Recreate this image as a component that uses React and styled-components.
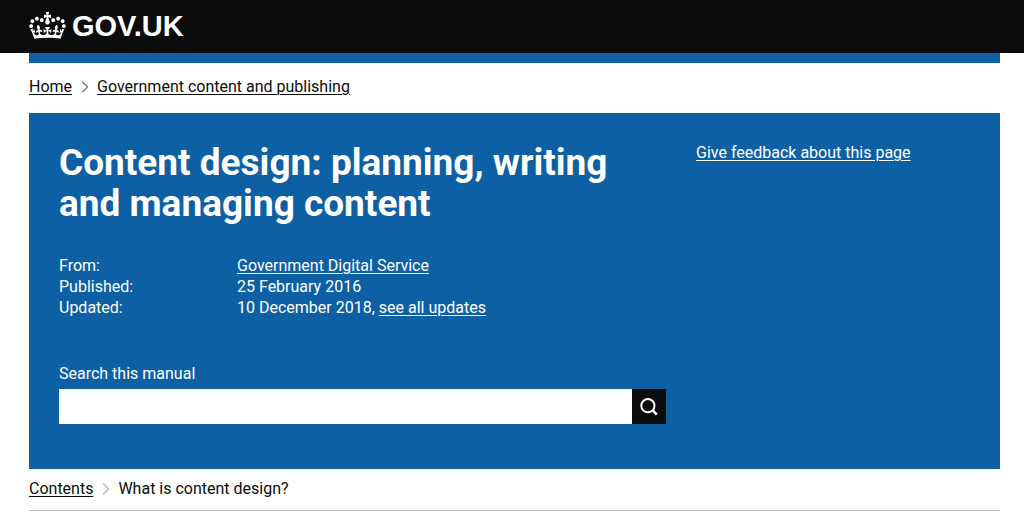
import React from "react";
import styled, { createGlobalStyle, css } from "styled-components";

const GlobalStyle = createGlobalStyle`
  * {
    box-sizing: border-box;
  }
  body {
    margin: 0;
    background: #ffffff;
    color: #0b0c0c;
    font-family: Roboto, "Noto Sans", sans-serif;
    font-size: 16px;
    line-height: 21px;
  }
`;

const Container = styled.div`
  padding: 0 24px 0 29px;
`;

const Header = styled.header`
  background: #0b0c0c;
`;

const HeaderInner = styled(Container)`
  display: flex;
  align-items: center;
  height: 53px;
  padding-bottom: 2px;
`;

const HomeLink = styled.a`
  display: flex;
  align-items: center;
  gap: 6px;
  color: #ffffff;
  font-family: "Liberation Sans", Arial, sans-serif;
  font-size: 29px;
  font-weight: 700;
  line-height: 30px;
  text-decoration: none;
`;

const PhaseBar = styled.div`
  height: 10px;
  background: #0e60a5;
`;

const Crumbs = styled.nav`
  ol {
    display: flex;
    align-items: center;
    gap: 9px;
    margin: 0;
    padding: 0;
    list-style: none;
  }
  li {
    display: flex;
    align-items: center;
    gap: 8px;
  }

  ${(props) => {
    if (props.$place === "top") {
      return css`
        padding: 13px 0 16px;
        svg {
          color: #6f777b;
        }
      `;
    }
    return css`
      padding: 9px 0 11px;
      border-bottom: 1px solid #bfc1c3;
      svg {
        color: #b1b4b6;
      }
    `;
  }}
`;

const TextLink = styled.a`
  color: inherit;
  text-decoration: underline;
  text-decoration-thickness: 1px;
  text-underline-offset: 2px;
`;

const Banner = styled.section`
  display: grid;
  grid-template-columns: 607fr 274fr;
  column-gap: 30px;
  padding: 29px 30px 45px;
  background: #0e60a5;
  color: #ffffff;
`;

const Title = styled.h1`
  margin: 0 0 31px;
  font-size: 37px;
  font-weight: 700;
  line-height: 41px;
`;

const Metadata = styled.dl`
  display: grid;
  grid-template-columns: 178px 1fr;
  margin: 0;
  line-height: 21px;

  dd {
    margin: 0;
  }
`;

const SearchForm = styled.form`
  margin-top: 45px;

  label {
    display: block;
    margin-bottom: 5px;
  }
`;

const SearchRow = styled.div`
  display: flex;
`;

const SearchInput = styled.input`
  flex: 1;
  min-width: 0;
  height: 35px;
  padding: 0 8px;
  border: 0;
  border-radius: 0;
  background: #ffffff;
  font: inherit;
`;

const SearchButton = styled.button`
  display: flex;
  align-items: center;
  justify-content: center;
  width: 34px;
  height: 35px;
  padding: 0;
  border: 0;
  background: #0b0c0c;
  color: #ffffff;
`;

const Crown = () => (
  <svg width="37" height="27" viewBox="0 0 132 97" fill="currentColor" aria-hidden="true">
    <path d="M25 30.2c3.5 1.5 7.7-.2 9.1-3.7 1.5-3.6-.2-7.8-3.9-9.2-3.6-1.4-7.6.3-9.1 3.9-1.4 3.5.3 7.5 3.9 9zM9 39.5c3.6 1.5 7.8-.2 9.2-3.7 1.5-3.6-.2-7.8-3.9-9.1-3.6-1.5-7.6.2-9.1 3.8-1.4 3.5.3 7.5 3.8 9zM4.4 57.2c3.5 1.5 7.7-.2 9.1-3.8 1.5-3.6-.2-7.7-3.9-9.1-3.5-1.5-7.6.3-9.1 3.8-1.4 3.5.3 7.6 3.9 9.1zm38.3-21.4c3.5 1.5 7.7-.2 9.1-3.8 1.5-3.6-.2-7.7-3.9-9.1-3.6-1.5-7.6.3-9.1 3.8-1.3 3.6.4 7.7 3.9 9.1zm64.4-5.6c-3.6 1.5-7.8-.2-9.1-3.7-1.5-3.6.2-7.8 3.8-9.2 3.6-1.4 7.7.3 9.2 3.9 1.3 3.5-.4 7.5-3.9 9zm15.9 9.3c-3.6 1.5-7.7-.2-9.1-3.7-1.5-3.6.2-7.8 3.7-9.1 3.6-1.5 7.7.2 9.2 3.8 1.5 3.5-.3 7.5-3.8 9zm4.7 17.7c-3.6 1.5-7.8-.2-9.2-3.8-1.5-3.6.2-7.7 3.9-9.1 3.6-1.5 7.7.3 9.2 3.8 1.3 3.5-.4 7.6-3.9 9.1zM89.3 35.8c-3.6 1.5-7.8-.2-9.2-3.8-1.4-3.6.2-7.7 3.9-9.1 3.6-1.5 7.7.3 9.2 3.8 1.4 3.6-.3 7.7-3.9 9.1zM69.7 17.7l8.9 4.7V9.3l-8.9 2.8c-.2-.3-.5-.6-.9-.9L72.4 0H59.6l3.5 11.2c-.3.3-.6.5-.9.9l-8.8-2.8v13.1l8.8-4.7c.3.3.6.7.9.9l-5 15.4v.1c-.2.8-.4 1.6-.4 2.4 0 4.1 3.1 7.5 7 8.1h.2c.3 0 .7.1 1 .1.4 0 .7 0 1-.1h.2c4-.6 7.1-4.1 7.1-8.1 0-.8-.1-1.7-.4-2.4V34l-5.1-15.4c.4-.2.7-.6 1-.9zM66 92.8c16.9 0 32.8 1.1 47.1 3.2 4-16.9 8.9-26.7 14-33.5l-9.6-3.4c1 4.9 1.1 7.2 0 10.2-1.5-1.4-3-4.3-4.2-8.7L108.6 76c2.8-2 5-3.2 7.5-3.3-4.4 9.4-10 11.9-13.6 11.2-4.3-.8-6.3-4.6-5.6-7.9 1-4.7 5.7-5.9 8-.5 4.3-8.7-3-11.4-7.6-8.8 7.1-7.2 7.9-13.5 2.1-21.1-8 6.1-8.1 12.3-4.5 20.8-4.7-5.4-12.1-2.5-9.5 6.2 3.4-5.2 7.9-2 7.2 3.1-.6 4.3-6.4 7.8-13.5 7.2-10.3-.9-10.9-8-11.2-13.8 2.5-.5 7.1 1.8 11 7.3L80.2 60c-4.1 4.4-8 5.3-12.3 5.4 1.4-4.4 8-11.6 8-11.6H55.5s6.4 7.2 7.9 11.6c-4.2-.1-8-1-12.3-5.4l1.4 16.4c3.9-5.5 8.5-7.7 10.9-7.3-.3 5.8-.9 12.8-11.1 13.8-7.2.6-12.9-2.9-13.5-7.2-.7-5 3.8-8.3 7.1-3.1 2.7-8.7-4.6-11.6-9.4-6.2 3.7-8.5 3.6-14.7-4.6-20.8-5.8 7.6-5 13.9 2.2 21.1-4.7-2.6-11.9.1-7.7 8.8 2.3-5.5 7.1-4.2 8.1.5.7 3.3-1.3 7.1-5.7 7.9-3.5.7-9-1.8-13.5-11.2 2.5.1 4.7 1.3 7.5 3.3l-4.7-15.4c-1.2 4.4-2.7 7.2-4.3 8.7-1.1-3-.9-5.3 0-10.2l-9.5 3.4c5 6.9 9.9 16.7 14 33.5 14.8-2.1 30.8-3.2 47.7-3.2z" />
  </svg>
);

const Chevron = () => (
  <svg width="8" height="12" viewBox="0 0 8 12" fill="none" stroke="currentColor" strokeWidth="1.2" aria-hidden="true">
    <path d="M1.2 .8 6.6 6 1.2 11.2" />
  </svg>
);

const SearchIcon = () => (
  <svg width="18" height="18" viewBox="0 0 18 18" fill="none" stroke="currentColor" strokeWidth="2" aria-hidden="true">
    <circle cx="7.9" cy="7.7" r="6.6" />
    <path d="M12.4 12.2 16.8 16.6" strokeWidth="2.6" />
  </svg>
);

const App = () => {
  return (
    <>
      <GlobalStyle />
      <Header>
        <HeaderInner>
          <HomeLink href="#">
            <Crown />
            GOV.UK
          </HomeLink>
        </HeaderInner>
      </Header>
      <Container>
        <PhaseBar />
        <Crumbs $place="top" aria-label="Breadcrumb">
          <ol>
            <li>
              <TextLink href="#">Home</TextLink>
            </li>
            <li>
              <Chevron />
              <TextLink href="#">Government content and publishing</TextLink>
            </li>
          </ol>
        </Crumbs>
        <main>
          <Banner>
            <div>
              <Title>Content design: planning, writing and managing content</Title>
              <Metadata>
                <dt>From:</dt>
                <dd>
                  <TextLink href="#">Government Digital Service</TextLink>
                </dd>
                <dt>Published:</dt>
                <dd>25 February 2016</dd>
                <dt>Updated:</dt>
                <dd>
                  10 December 2018, <TextLink href="#">see all updates</TextLink>
                </dd>
              </Metadata>
              <SearchForm role="search" onSubmit={(e) => e.preventDefault()}>
                <label htmlFor="manual-search">Search this manual</label>
                <SearchRow>
                  <SearchInput id="manual-search" type="text" name="q" />
                  <SearchButton type="submit" aria-label="Search">
                    <SearchIcon />
                  </SearchButton>
                </SearchRow>
              </SearchForm>
            </div>
            <div>
              <TextLink href="#">Give feedback about this page</TextLink>
            </div>
          </Banner>
          <Crumbs $place="manual" aria-label="Manual">
            <ol>
              <li>
                <TextLink href="#">Contents</TextLink>
              </li>
              <li>
                <Chevron />
                What is content design?
              </li>
            </ol>
          </Crumbs>
        </main>
      </Container>
    </>
  );
};

export default App;
